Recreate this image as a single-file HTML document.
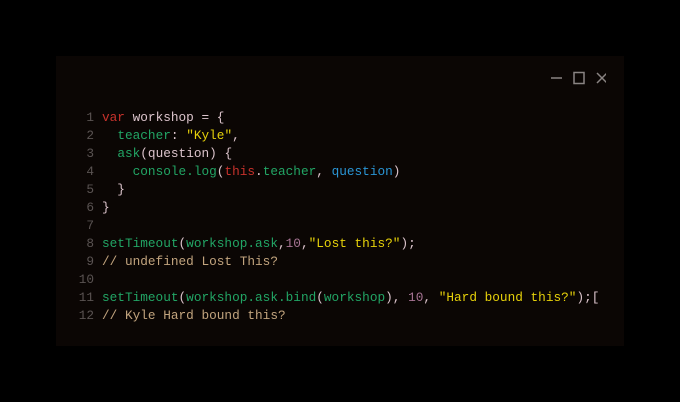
<!DOCTYPE html>
<html><head><style>
body{margin:0;width:680px;height:402px;background:#000;position:relative;overflow:hidden}
.p{position:absolute;left:56px;top:56px;width:568px;height:290px;background:#0b0604}
pre{position:absolute;left:0;top:109px;margin:0;font-family:"Liberation Mono",monospace;font-size:12.75px;line-height:18px;color:#dcc4cc}
.n{display:inline-block;width:94px;text-align:right;color:#5a5352;margin-right:8px}
.k{color:#c8322c}.g{color:#22a565}.y{color:#e6d10a}.b{color:#2a95d5}.m{color:#a87595}.c{color:#c2a47e}
</style></head><body>
<div class="p">
<svg style="position:absolute;left:490px;top:14px" width="60" height="16" viewBox="0 0 60 16" fill="none" stroke="#8a8483" stroke-width="1.5">
<line x1="5" y1="8" x2="16" y2="8"/><rect x="28" y="2.5" width="10" height="11"/><path d="M51 3l10 10M61 3l-10 10"/></svg>
</div>
<pre><span class="n">1</span><span class="k">var</span> workshop = {
<span class="n">2</span>  <span class="g">teacher</span>: <span class="y">"Kyle"</span>,
<span class="n">3</span>  <span class="g">ask</span>(question) {
<span class="n">4</span>    <span class="g">console.log</span>(<span class="k">this</span>.<span class="g">teacher</span>, <span class="b">question</span>)
<span class="n">5</span>  }
<span class="n">6</span>}
<span class="n">7</span>
<span class="n">8</span><span class="g">setTimeout</span>(<span class="g">workshop.ask</span>,<span class="m">10</span>,<span class="y">"Lost this?"</span>);
<span class="n">9</span><span class="c">// undefined Lost This?</span>
<span class="n">10</span>
<span class="n">11</span><span class="g">setTimeout</span>(<span class="g">workshop.ask.bind</span>(<span class="g">workshop</span>), <span class="m">10</span>, <span class="y">"Hard bound this?"</span>);[
<span class="n">12</span><span class="c">// Kyle Hard bound this?</span>
</pre>
</body></html>
